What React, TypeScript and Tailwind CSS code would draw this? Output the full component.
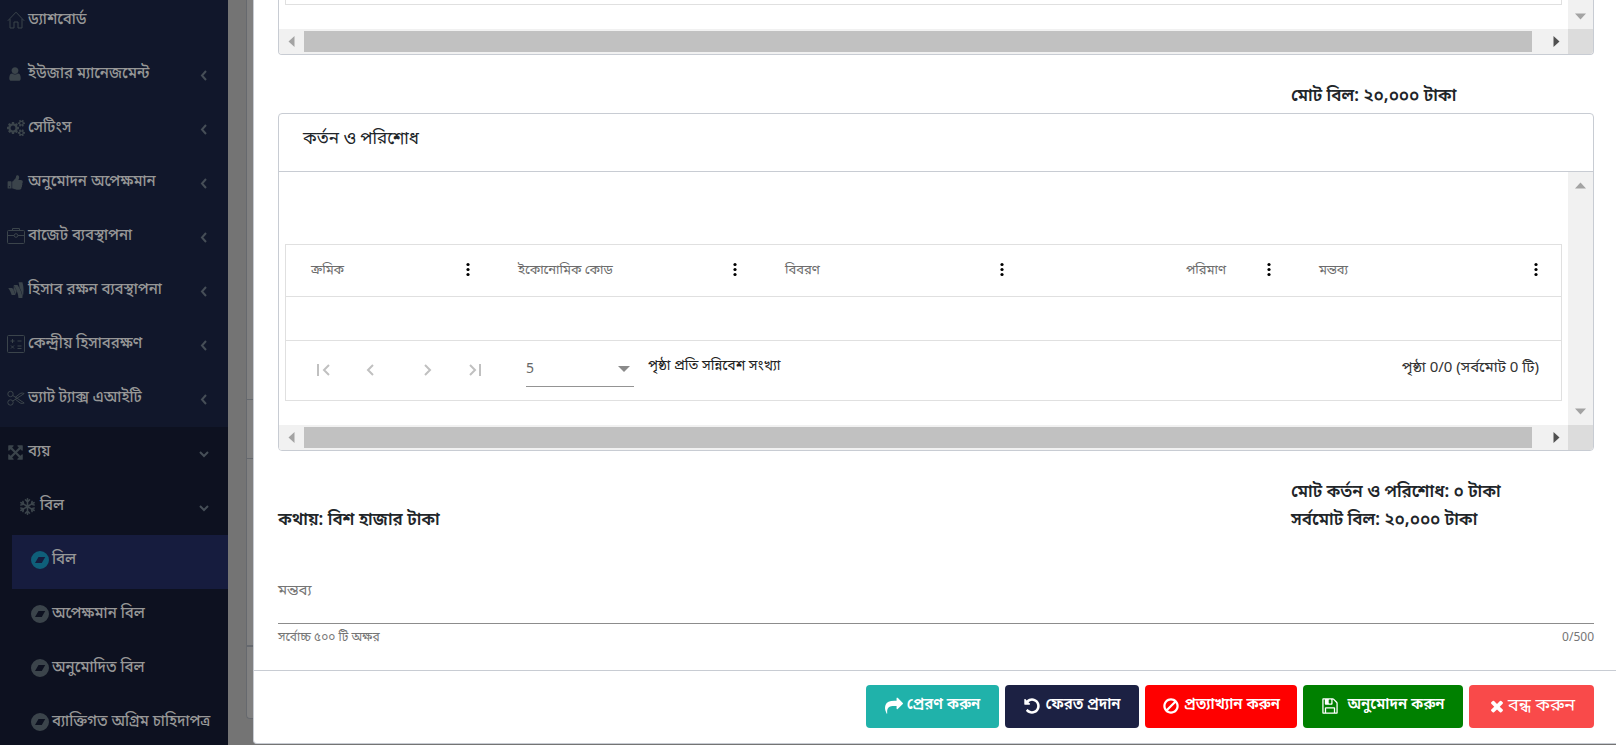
import { ReactNode } from "react";
import { FaGoogleWallet, FaRegSnowflake } from "react-icons/fa";

const awesome = {
  user: "M1536 1399q0 109-62.5 187t-150.5 78h-854q-88 0-150.5-78t-62.5-187q0-85 8.5-160.5t31.5-152 58.5-131 94-89 134.5-34.5q131 128 313 128t313-128q76 0 134.5 34.5t94 89 58.5 131 31.5 152 8.5 160.5zm-256-887q0 159-112.5 271.5t-271.5 112.5-271.5-112.5-112.5-271.5 112.5-271.5 271.5-112.5 271.5 112.5 112.5 271.5z",
  cogs: "M896 896q0-106-75-181t-181-75-181 75-75 181 75 181 181 75 181-75 75-181zm768 512q0-52-38-90t-90-38-90 38-38 90q0 53 37.5 90.5t90.5 37.5 90.5-37.5 37.5-90.5zm0-1024q0-52-38-90t-90-38-90 38-38 90q0 53 37.5 90.5t90.5 37.5 90.5-37.5 37.5-90.5zm-384 421v185q0 10-7 19.5t-16 10.5l-155 24q-11 35-32 76 34 48 90 115 7 11 7 20 0 12-7 19-23 30-82.5 89.5t-78.5 59.5q-11 0-21-7l-115-90q-37 19-77 31-11 108-23 155-7 24-30 24h-186q-11 0-20-7.5t-10-17.5l-23-153q-34-10-75-31l-118 89q-7 7-20 7-11 0-21-8-144-133-144-160 0-9 7-19 10-14 41-53t47-61q-23-44-35-82l-152-24q-10-1-17-9.5t-7-19.5v-185q0-10 7-19.5t16-10.5l155-24q11-35 32-76-34-48-90-115-7-11-7-20 0-12 7-20 22-30 82-89t79-59q11 0 21 7l115 90q34-18 77-32 11-108 23-154 7-24 30-24h186q11 0 20 7.5t10 17.5l23 153q34 10 75 31l118-89q8-7 20-7 11 0 21 8 144 133 144 160 0 8-7 19-12 16-42 54t-45 60q23 48 34 82l152 23q10 2 17 10.5t7 19.5zm640 533v140q0 16-149 31-12 27-30 52 51 113 51 138 0 4-4 7-122 71-124 71-8 0-46-47t-52-68q-20 2-30 2t-30-2q-14 21-52 68t-46 47q-2 0-124-71-4-3-4-7 0-25 51-138-18-25-30-52-149-15-149-31v-140q0-16 149-31 13-29 30-52-51-113-51-138 0-4 4-7 4-2 35-20t59-34 30-16q8 0 46 46.5t52 67.5q20-2 30-2t30 2q51-71 92-112l6-2q4 0 124 70 4 3 4 7 0 25-51 138 17 23 30 52 149 15 149 31zm0-1024v140q0 16-149 31-12 27-30 52 51 113 51 138 0 4-4 7-122 71-124 71-8 0-46-47t-52-68q-20 2-30 2t-30-2q-14 21-52 68t-46 47q-2 0-124-71-4-3-4-7 0-25 51-138-18-25-30-52-149-15-149-31v-140q0-16 149-31 13-29 30-52-51-113-51-138 0-4 4-7 4-2 35-20t59-34 30-16q8 0 46 46.5t52 67.5q20-2 30-2t30 2q51-71 92-112l6-2q4 0 124 70 4 3 4 7 0 25-51 138 17 23 30 52 149 15 149 31z",
  thumb: "M320 1344q0-26-19-45t-45-19q-27 0-45.5 19t-18.5 45q0 27 18.5 45.5t45.5 18.5q26 0 45-18.5t19-45.5zm160-512v640q0 26-19 45t-45 19h-288q-26 0-45-19t-19-45v-640q0-26 19-45t45-19h288q26 0 45 19t19 45zm1184 0q0 86-55 149 15 44 15 76 3 76-43 137 17 56 0 117-15 57-54 94 9 112-49 181-64 76-197 78h-129q-66 0-144-15.5t-121.5-29-120.5-39.5q-123-43-158-44-26-1-45-19.5t-19-44.5v-641q0-25 18-43.5t43-20.5q24-2 76-59t101-121q68-87 101-120 18-18 31-48t17.5-48.5 13.5-60.5q7-39 12.5-61t19.5-52 34-50q19-19 45-19 46 0 82.5 10.5t60 26 40 40.5 24 45 12 50 5 45 .5 39q0 38-9.5 76t-19 60-27.5 56q-3 6-10 18t-11 22-8 24h277q78 0 135 57t57 135z",
  arrows: "M1411 541l-355 355 355 355 144-144q29-31 70-14 39 17 39 59v448q0 26-19 45t-45 19h-448q-42 0-59-40-17-39 14-69l144-144-355-355-355 355 144 144q31 30 14 69-17 40-59 40h-448q-26 0-45-19t-19-45v-448q0-42 40-59 39-17 69 14l144 144 355-355-355-355-144 144q-19 19-45 19-12 0-24-5-40-17-40-59v-448q0-26 19-45t45-19h448q42 0 59 40 17 39-14 69l-144 144 355 355 355-355-144-144q-31-30-14-69 17-40 59-40h448q26 0 45 19t19 45v448q0 42-39 59-13 5-25 5-26 0-45-19z",
  share: "M1792 640q0 26-19 45l-512 512q-19 19-45 19t-45-19-19-45v-256h-224q-98 0-175.5 6t-154 21.5-133 42.5-105.5 69.5-80 101-48.5 138.5-17.5 181q0 55 5 123 0 6 2.5 23.5t2.5 26.5q0 15-8.5 25t-23.5 10q-16 0-28-17-7-9-13-22t-13.5-30-10.5-24q-127-285-127-451 0-199 53-333 162-403 875-403h224v-256q0-26 19-45t45-19 45 19l512 512q19 19 19 45z",
  undo: "M1664 896q0 156-61 298t-164 245-245 164-298 61q-172 0-327-72.5t-264-204.5q-7-10-6.5-22.5t8.5-20.5l137-138q10-9 25-9 16 2 23 12 73 95 179 147t225 52q104 0 198.5-40.5t163.5-109.5 109.5-163.5 40.5-198.5-40.5-198.5-109.5-163.5-163.5-109.5-198.5-40.5q-98 0-188 35.5t-160 101.5l137 138q31 30 14 69-17 40-59 40h-448q-26 0-45-19t-19-45v-448q0-42 40-59 39-17 69 14l130 129q107-101 244.5-156.5t284.5-55.5q156 0 298 61t245 164 164 245 61 298z",
  ban: "M1440 893q0-161-87-295l-754 753q137 89 297 89 111 0 211.5-43.5t173.5-116.5 116-174.5 43-212.5zm-999 299l755-754q-135-91-300-91-148 0-273 73t-198 199-73 274q0 162 89 299zm1223-299q0 157-61 300t-163.5 246-245 164-298.5 61-298.5-61-245-164-163.5-246-61-300 61-299.5 163.5-245.5 245-164 298.5-61 298.5 61 245 164 163.5 245.5 61 299.5z",
  save: "M512 1536h768v-384h-768v384zm896 0h128v-896q0-14-10-38.5t-20-34.5l-281-281q-10-10-34-20t-39-10v416q0 40-28 68t-68 28h-576q-40 0-68-28t-28-68v-416h-128v1280h128v-416q0-40 28-68t68-28h832q40 0 68 28t28 68v416zm-384-928v-320q0-13-9.5-22.5t-22.5-9.5h-192q-13 0-22.5 9.5t-9.5 22.5v320q0 13 9.5 22.5t22.5 9.5h192q13 0 22.5-9.5t9.5-22.5zm640 32v928q0 40-28 68t-68 28h-1344q-40 0-68-28t-28-68v-1344q0-40 28-68t68-28h928q40 0 88 20t76 48l280 280q28 28 48 76t20 88z",
  times: "M1490 1322q0 40-28 68l-136 136q-28 28-68 28t-68-28l-294-294-294 294q-28 28-68 28t-68-28l-136-136q-28-28-28-68t28-68l294-294-294-294q-28-28-28-68t28-68l136-136q28-28 68-28t68 28l294 294 294-294q28-28 68-28t68 28l136 136q28 28 28 68t-28 68l-294 294 294 294q28 28 28 68z",
};

interface AwesomeProps {
  name: keyof typeof awesome;
  className?: string;
}

const Awesome = ({ name, className = "size-[17px]" }: AwesomeProps) => (
  <svg
    viewBox={name === "cogs" ? "0 0 1920 1792" : "0 0 1792 1792"}
    fill="currentColor"
    className={className}
  >
    <path d={awesome[name]} />
  </svg>
);

const Outline = ({ children }: { children: ReactNode }) => (
  <svg
    viewBox="0 0 18 18"
    fill="none"
    stroke="currentColor"
    className="size-[18px]"
  >
    {children}
  </svg>
);

const HomeIcon = () => (
  <Outline>
    <path d="M.8 9.8 9 1.2l8.2 8.6M3 8v9h4v-6h4v6h4V8" />
  </Outline>
);

const CaseIcon = () => (
  <Outline>
    <rect x=".5" y="3.5" width="17" height="13" rx="1" />
    <path d="M5.5 3.5v-2h7v2M.5 8.5H7M11 8.5h6.5" />
    <circle cx="9" cy="8.5" r="1.8" />
  </Outline>
);

const CalculatorIcon = () => (
  <Outline>
    <rect x=".5" y=".5" width="17" height="17" rx="1" />
    <path d="M3.5 6h4M5.5 4v4M10.5 6h4M4 10.5l3 3M7 10.5l-3 3M10.5 11h4M10.5 13.5h4" />
  </Outline>
);

const ScissorsIcon = () => (
  <Outline>
    <circle cx="3.5" cy="5" r="2.7" />
    <circle cx="3.5" cy="13.5" r="2.7" />
    <path d="M5.8 6.5 17.2 14q-2 1-4 0L8 10M5.8 12 17.2 4.5q-2-1-4 0L8 8.5" />
  </Outline>
);

// round badge with a slanted cut-out
const CompassIcon = () => (
  <svg viewBox="0 0 18 18" fill="currentColor" className="size-[18px]">
    <path
      fillRule="evenodd"
      d="M9 0a9 9 0 1 0 0 18A9 9 0 0 0 9 0zM7.5 6h6.7l-3.4 6H4z"
    />
  </svg>
);

interface Item {
  label: string;
  icon: ReactNode;
  level: 1 | 2 | 3;
  arrow?: "left" | "down";
  active?: boolean;
}

const closedItems: Item[] = [
  { label: "ড্যাশবোর্ড", icon: <HomeIcon />, level: 1 },
  { label: "ইউজার ম্যানেজমেন্ট", icon: <Awesome name="user" className="size-4" />, level: 1, arrow: "left" },
  { label: "সেটিংস", icon: <Awesome name="cogs" className="size-[18px]" />, level: 1, arrow: "left" },
  { label: "অনুমোদন অপেক্ষমান", icon: <Awesome name="thumb" />, level: 1, arrow: "left" },
  { label: "বাজেট ব্যবস্থাপনা", icon: <CaseIcon />, level: 1, arrow: "left" },
  { label: "হিসাব রক্ষন ব্যবস্থাপনা", icon: <FaGoogleWallet size={18} />, level: 1, arrow: "left" },
  { label: "কেন্দ্রীয় হিসাবরক্ষণ", icon: <CalculatorIcon />, level: 1, arrow: "left" },
  { label: "ভ্যাট ট্যাক্স এআইটি", icon: <ScissorsIcon />, level: 1, arrow: "left" },
];

const openItems: Item[] = [
  { label: "ব্যয়", icon: <Awesome name="arrows" />, level: 1, arrow: "down" },
  { label: "বিল", icon: <FaRegSnowflake size={17} />, level: 2, arrow: "down" },
  { label: "বিল", icon: <CompassIcon />, level: 3, active: true },
  { label: "অপেক্ষমান বিল", icon: <CompassIcon />, level: 3 },
  { label: "অনুমোদিত বিল", icon: <CompassIcon />, level: 3 },
  { label: "ব্যাক্তিগত অগ্রিম চাহিদাপত্র", icon: <CompassIcon />, level: 3 },
];

const MenuItem = ({ label, icon, level, arrow, active }: Item) => (
  <li className={level === 1 ? "" : "pl-3"}>
    <a
      href="#"
      className={`flex h-[54px] items-center pr-[17px] pb-0.5 ${
        level === 3 ? "pl-[19px]" : "pl-[7px]"
      } ${active ? "bg-[#161c3e]" : ""}`}
    >
      <span className={`w-[21px] shrink-0 pb-0.5 ${active ? "text-[#0f5f7a]" : "text-[#3b444b]"}`}>
        {icon}
      </span>
      <span className="grow pb-0.5 whitespace-nowrap">{label}</span>
      {arrow && (
        <svg viewBox="0 0 14 14" fill="none" stroke="#464e57" strokeWidth="2" className="size-3.5">
          <path d={arrow === "left" ? "M9 3 5 7.5l4 4.5" : "M3 6l4 4 4-4"} />
        </svg>
      )}
    </a>
  </li>
);

const Triangle = ({ dir }: { dir: "up" | "down" | "left" | "right" }) => {
  const points = {
    up: "0,8.5 5.5,2.5 11,8.5",
    down: "0,2.5 5.5,8.5 11,2.5",
    left: "8.5,0 2.5,5.5 8.5,11",
    right: "2.5,0 8.5,5.5 2.5,11",
  };
  return (
    <svg viewBox="0 0 11 11" className="size-[11px]" fill={dir === "right" ? "#505050" : "#a3a3a3"}>
      <polygon points={points[dir]} />
    </svg>
  );
};

const ScrollX = () => (
  <>
    <div className="flex h-[25px] items-center bg-[#f1f1f1]">
      <div className="flex w-[25px] justify-center">
        <Triangle dir="left" />
      </div>
      <div className="h-[21px] grow bg-[#c1c1c1]" />
      <div className="flex w-9 justify-end pr-1.5">
        <Triangle dir="right" />
      </div>
    </div>
    <div className="bg-[#dcdcdc]" />
  </>
);

const columns = ["ক্রমিক", "ইকোনোমিক কোড", "বিবরণ", "পরিমাণ", "মন্তব্য"];

const pagerIcons = [
  { label: "প্রথম", d: "M6 6v12M17 7l-5 5 5 5", margin: "ml-[26px]" },
  { label: "পূর্ববর্তী", d: "M14 7l-5 5 5 5", margin: "ml-[23px]" },
  { label: "পরবর্তী", d: "M10 7l5 5-5 5", margin: "ml-8" },
  { label: "শেষ", d: "M8 7l5 5-5 5M18 6v12", margin: "ml-[23px]" },
];

const actions: { label: string; icon: AwesomeProps["name"]; style: string }[] = [
  { label: "প্রেরণ করুন", icon: "share", style: "min-w-[133px] bg-[#20b2aa] gap-1" },
  { label: "ফেরত প্রদান", icon: "undo", style: "min-w-[134px] bg-[#1c2143] gap-1" },
  { label: "প্রত্যাখ্যান করুন", icon: "ban", style: "min-w-[152px] bg-[#ff0000] gap-1" },
  { label: "অনুমোদন করুন", icon: "save", style: "min-w-[160px] bg-[#008000] gap-2" },
];

const Deductions = () => (
  <section className="overflow-hidden rounded border border-[#c8ccd3]">
    <h2 className="h-[58px] border-b border-[#c8ccd3] px-6 pt-3 text-[17px] leading-7">
      কর্তন ও পরিশোধ
    </h2>
    <div className="grid grid-cols-[1fr_25px]">
      <div className="px-1.5 pt-[72px] pb-6">
        <div className="border border-[#e0e0e0]">
          <table className="w-full table-fixed">
            <colgroup>
              <col className="w-[207px]" />
              <col />
              <col />
              <col />
              <col />
            </colgroup>
            <thead>
              <tr className="h-[51px] border-b border-[#e0e0e0]">
                {columns.map((name, i) => (
                  <th key={name} className="pr-[13px] pl-[25px] font-normal">
                    <div className={`flex items-center ${i === 3 ? "justify-end gap-[31px]" : "justify-between"}`}>
                      <span className="text-[13px] text-[#6c6c6c]">{name}</span>
                      <button type="button" aria-label={`${name} মেনু`}>
                        <svg viewBox="0 0 24 24" className="size-6">
                          <circle cx="12" cy="6.5" r="1.6" />
                          <circle cx="12" cy="11.5" r="1.6" />
                          <circle cx="12" cy="16.5" r="1.6" />
                        </svg>
                      </button>
                    </div>
                  </th>
                ))}
              </tr>
            </thead>
            <tbody>
              <tr className="h-11 border-b border-[#e0e0e0]">
                <td colSpan={5} />
              </tr>
            </tbody>
          </table>
          <div className="flex h-[59px] items-center">
            {pagerIcons.map(({ label, d, margin }) => (
              <button key={label} type="button" aria-label={label} className={margin}>
                <svg viewBox="0 0 24 24" fill="none" stroke="#c0c0c0" strokeWidth="2" className="size-6">
                  <path d={d} />
                </svg>
              </button>
            ))}
            <div className="relative ml-10 w-[108px] border-b border-[#949494]">
              <select
                id="page-size"
                className="h-8 w-full appearance-none text-sm text-[#666666]"
              >
                <option>5</option>
              </select>
              <svg viewBox="0 0 12 6" fill="#8a8a8a" className="pointer-events-none absolute top-3 right-1 h-1.5 w-3">
                <path d="M0 0h12L6 6z" />
              </svg>
            </div>
            <label htmlFor="page-size" className="ml-3.5 grow pb-1.5 text-sm text-[#212121]">
              পৃষ্ঠা প্রতি সন্নিবেশ সংখ্যা
            </label>
            <span className="pr-[22px] pb-1 text-[15px] text-[#333333]">
              পৃষ্ঠা 0/0 (সর্বমোট 0 টি)
            </span>
          </div>
        </div>
      </div>
      <div className="flex flex-col items-center justify-between bg-[#f1f1f1] py-2">
        <Triangle dir="up" />
        <Triangle dir="down" />
      </div>
      <ScrollX />
    </div>
  </section>
);

const App = () => {
  return (
    <div className="flex h-screen overflow-hidden bg-[#747474] font-['Noto_Sans_Bengali','Noto_Sans',sans-serif] text-[#212529]">
      <nav className="w-[228px] shrink-0 bg-[#11172b] text-[15px] font-medium text-[#979797]">
        <ul className="-mt-[5px]">
          {closedItems.map((item) => (
            <MenuItem key={item.label} {...item} />
          ))}
        </ul>
        <ul className="bg-[#0d1120]">
          {openItems.map((item) => (
            <MenuItem key={item.label + item.level} {...item} />
          ))}
        </ul>
      </nav>

      {/* edge of the dimmed page behind the dialog */}
      <div className="ml-[18px] flex w-[7px] shrink-0 flex-col">
        <div className="h-[400px] border-b border-l border-[#66696e] bg-[#808080]" />
        <div className="h-[59px] border-b border-l border-[#66696e] bg-[#808080]" />
        <div className="h-[188px] border-b-2 border-l border-[#66696e] bg-[#808080]" />
        <div className="h-[72px] rounded-bl border-b border-l border-[#66696e] bg-[#808080]" />
      </div>

      <main className="h-[744px] min-w-0 grow rounded-bl border-b border-l border-[#c8ccd3] bg-white">
        <div className="border-b border-[#c8ccd3] pr-[22px] pl-6">
          <section className="grid grid-cols-[1fr_25px] overflow-hidden rounded-b border border-t-0 border-[#c8ccd3]">
            <div className="h-[29px] px-1.5">
              <div className="h-[5px] border border-t-0 border-[#e0e0e0]" />
            </div>
            <div className="flex items-end justify-center bg-[#f1f1f1] pb-[7px]">
              <Triangle dir="down" />
            </div>
            <ScrollX />
          </section>

          <div className="mt-7 mb-0.5 grid grid-cols-[1fr_303px] text-[17px] leading-7 font-semibold">
            <span className="col-start-2">মোট বিল: ২০,০০০ টাকা</span>
          </div>

          <Deductions />

          <div className="mt-7 grid grid-cols-[1fr_303px] items-end text-[17px] leading-7 font-semibold">
            <p>কথায়: বিশ হাজার টাকা</p>
            <div>
              <p>মোট কর্তন ও পরিশোধ: ০ টাকা</p>
              <p>সর্বমোট বিল: ২০,০০০ টাকা</p>
            </div>
          </div>

          <div className="mt-10 text-[#757575]">
            <label htmlFor="remark" className="block h-8 text-[15px] leading-8">
              মন্তব্য
            </label>
            <input
              id="remark"
              type="text"
              maxLength={500}
              className="block h-[17px] w-full border-b border-[#8c8c8c] outline-none"
            />
            <div className="flex h-[46px] justify-between pt-1 text-xs leading-5">
              <span>সর্বোচ্চ ৫০০ টি অক্ষর</span>
              <span>0/500</span>
            </div>
          </div>
        </div>

        <footer className="flex justify-end gap-1.5 pt-3.5 pr-[22px] text-[15px] text-white">
          {actions.map(({ label, icon, style }) => (
            <button
              key={label}
              type="button"
              className={`flex h-[43px] items-center justify-center rounded font-semibold whitespace-nowrap ${style}`}
            >
              <Awesome name={icon} className="size-[18px]" />
              <span className="pb-0.5">{label}</span>
            </button>
          ))}
          <button
            type="button"
            className="flex h-[43px] min-w-[125px] items-center justify-center gap-0.5 rounded bg-[#f94a4a] text-lg whitespace-nowrap"
          >
            <Awesome name="times" className="size-[18px]" />
            <span>বন্ধ করুন</span>
          </button>
        </footer>
      </main>
    </div>
  );
};

export default App;
